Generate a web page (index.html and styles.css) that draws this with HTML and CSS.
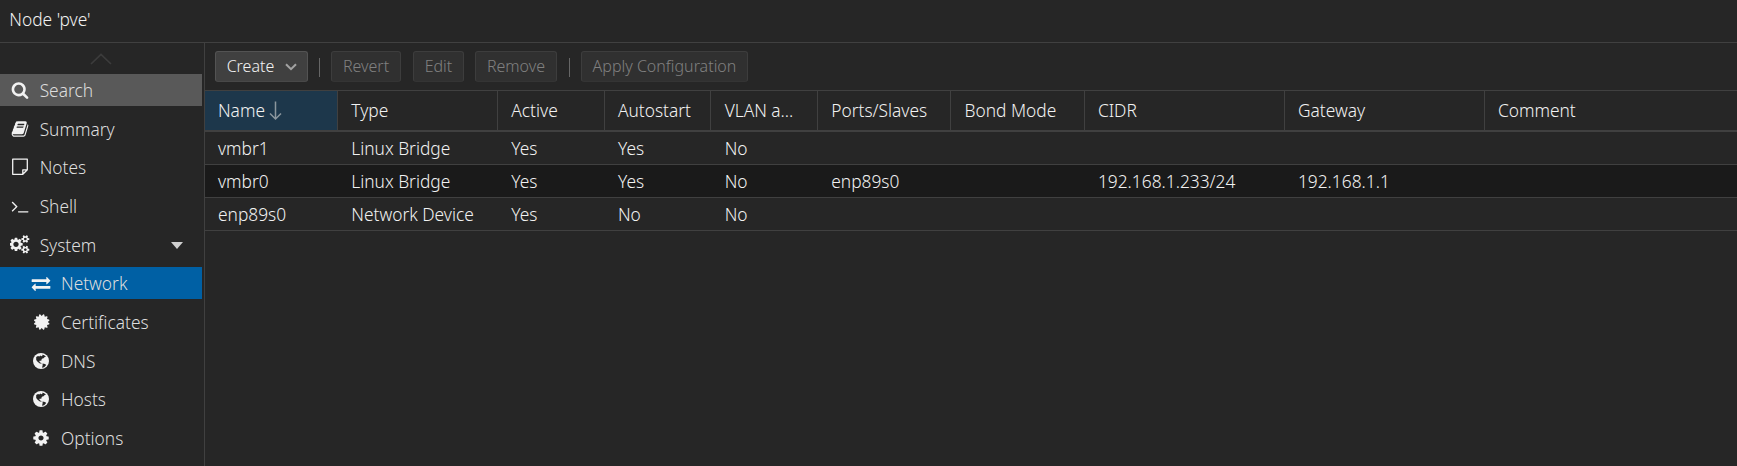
FILE: index.html
```html
<!DOCTYPE html>
<html lang="en">
<head>
<meta charset="utf-8">
<title>Node 'pve'</title>
<link rel="stylesheet" href="styles.css">
</head>
<body>
<svg class="defs" width="0" height="0">
  <symbol id="globe" viewBox="0 0 16 16">
    <circle cx="8" cy="8" r="8" fill="#f2f2f2"/>
    <path class="land" d="M3.200 3.900L5 2.900L6.300 3.400L7.400 2.400L8.300 3.200L9.600 2.700L9 1.700L10.800 1.900L13 3.600L11.400 4.300L10.600 5.200L9.400 5.600L8.400 6.800L8.200 8L6.900 7.600L6.300 8.400L7.100 9.400L8.400 10L8.400 10.800L6.400 10.300L4.400 8.600L3.200 7Z M9.600 10.400L12 11L13.200 12.100L11.200 14.300L9 14.700L9.600 12.600Z"/>
  </symbol>
</svg>
<header class="title">Node 'pve'</header>
<div class="body">
  <nav class="side">
    <div class="scroller"><svg width="22" height="12" viewBox="0 0 22 12"><path d="M1 11L11 1.500L21 11" fill="none" stroke="#3c3c3c" stroke-width="1.700"/></svg></div>
    <a class="item hover"><svg class="ico" viewBox="0 0 1792 1792"><path d="M1216 832q0-185-131.500-316.500t-316.500-131.500-316.500 131.500-131.500 316.500 131.500 316.500 316.500 131.500 316.500-131.500 131.500-316.500zm512 832q0 52-38 90t-90 38q-54 0-90-38l-343-342q-179 124-399 124-143 0-273.500-55.500t-225-150-150-225-55.500-273.500 55.500-273.500 150-225 225-150 273.500-55.500 273.500 55.500 225 150 150 225 55.500 273.500q0 220-124 399l343 343q37 37 37 90z"/></svg>Search</a>
    <a class="item"><svg class="ico" viewBox="0 0 1792 1792"><path d="M1703 478q40 57 18 129l-275 906q-19 64-76.500 107.500t-122.500 43.500h-923q-77 0-148.500-53.500t-99.500-131.500q-24-67-2-127 0-4 3-27t4-37q1-8-3-21.500t-3-19.500q2-11 8-21t16.500-23.500 16.500-23.500q23-38 45-91.500t30-91.500q3-10 .5-30t-.5-28q3-11 17-28t17-23q21-36 42-92t25-90q1-9-2.500-32t.5-28q4-13 22-30.500t22-22.500q19-26 42.500-84.500t27.500-96.500q1-8-3-25.500t-2-26.500q2-8 9-18t18-23 17-21q8-12 16.500-30.500t15-35 16-36 19.500-32 26.500-23.500 36-11.500 47.500 5.500l-1 3q38-9 51-9h761q74 0 114 56t18 130l-274 906q-36 119-71.500 153.500t-128.500 34.500h-869q-27 0-38 15-11 16-1 43 24 70 144 70h923q29 0 56-15.500t35-41.500l300-987q7-22 5-57 38 15 59 43zm-1064 2q-4 13 2 22.500t20 9.500h608q13 0 25.500-9.500t16.500-22.500l21-64q4-13-2-22.500t-20-9.500h-608q-13 0-25.500 9.500t-16.500 22.500zm-83 256q-4 13 2 22.500t20 9.500h608q13 0 25.500-9.500t16.500-22.500l21-64q4-13-2-22.500t-20-9.500h-608q-13 0-25.500 9.500t-16.500 22.500z"/></svg>Summary</a>
    <a class="item"><svg class="ico" viewBox="0 0 18 18"><path d="M1.700 1.200H16.300V11.800L11.800 16.300H1.700ZM16.300 11.800H11.800V16.300" fill="none" stroke="#f2f2f2" stroke-width="1.300" stroke-linejoin="round"/></svg>Notes</a>
    <a class="item"><svg class="ico" viewBox="0 0 1792 1792"><path d="M649 983l-466 466q-10 10-23 10t-23-10l-50-50q-10-10-10-23t10-23l393-393-393-393q-10-10-10-23t10-23l50-50q10-10 23-10t23 10l466 466q10 10 10 23t-10 23zm1079 457v64q0 14-9 23t-23 9h-960q-14 0-23-9t-9-23v-64q0-14 9-23t23-9h960q14 0 23 9t9 23z"/></svg>Shell</a>
    <a class="item"><svg class="ico wide" viewBox="0 0 1920 1792"><path d="M832 896q0-106-75-181t-181-75-181 75-75 181 75 181 181 75 181-75 75-181zm768 512q0-52-38-90t-90-38-90 38-38 90q0 53 37.500 90.500t90.500 37.500 90.500-37.500 37.500-90.500zm0-1024q0-52-38-90t-90-38-90 38-38 90q0 53 37.500 90.500t90.500 37.500 90.500-37.500 37.500-90.500zm-384 421v185q0 10-7 19.500t-16 10.500l-155 24q-11 35-32 76 34 48 90 115 7 11 7 20 0 12-7 19-23 30-82.500 89.500t-78.500 59.500q-11 0-21-7l-115-90q-37 19-77 31-11 108-23 155-7 24-30 24h-186q-11 0-20-7.500t-10-17.500l-23-153q-34-10-75-31l-118 89q-7 7-20 7-11 0-21-8-144-133-144-160 0-9 7-19 10-14 41-53t47-61q-23-44-35-82l-152-24q-10-1-17-9.500t-7-19.500v-185q0-10 7-19.500t16-10.500l155-24q11-35 32-76-34-48-90-115-7-11-7-20 0-12 7-20 22-30 82-89t79-59q11 0 21 7l115 90q34-18 77-32 11-108 23-154 7-24 30-24h186q11 0 20 7.500t10 17.500l23 153q34 10 75 31l118-89q8-7 20-7 11 0 21 8 144 133 144 160 0 8-7 19-12 16-42 54t-45 60q23 48 34 82l152 23q10 2 17 10.500t7 19.500zm640 533v140q0 16-149 31-12 27-30 52 51 113 51 138 0 4-4 7-122 71-124 71-8 0-46-47t-52-68q-20 2-30 2t-30-2q-14 21-52 68t-46 47q-2 0-124-71-4-3-4-7 0-25 51-138-18-25-30-52-149-15-149-31v-140q0-16 149-31 13-29 30-52-51-113-51-138 0-4 4-7 4-2 35-20t59-34 30-16q8 0 46 46.500t52 67.500q20-2 30-2t30 2q51-71 92-112l6-2q4 0 124 70 4 3 4 7 0 25-51 138 17 23 30 52 149 15 149 31zm0-1024v140q0 16-149 31-12 27-30 52 51 113 51 138 0 4-4 7-122 71-124 71-8 0-46-47t-52-68q-20 2-30 2t-30-2q-14 21-52 68t-46 47q-2 0-124-71-4-3-4-7 0-25 51-138-18-25-30-52-149-15-149-31v-140q0-16 149-31 13-29 30-52-51-113-51-138 0-4 4-7 4-2 35-20t59-34 30-16q8 0 46 46.500t52 67.500q20-2 30-2t30 2q51-71 92-112l6-2q4 0 124 70 4 3 4 7 0 25-51 138 17 23 30 52 149 15 149 31z"/></svg>System<svg class="expander" viewBox="0 0 12 7"><path d="M0 0H12L6 7Z"/></svg></a>
    <a class="item sub selected"><svg class="ico wide" viewBox="0 0 1792 1792"><path d="M1792 1184v192q0 13-9.500 22.500t-22.500 9.500h-1376v192q0 13-9.500 22.500t-22.500 9.500q-12 0-24-10l-319-320q-9-9-9-22 0-14 9-23l320-320q9-9 23-9 13 0 22.500 9.500t9.500 22.500v192h1376q13 0 22.500 9.500t9.500 22.500zm0-544q0 14-9 23l-320 320q-9 9-23 9-13 0-22.500-9.500t-9.500-22.500v-192h-1376q-13 0-22.500-9.500t-9.500-22.500v-192q0-13 9.500-22.500t22.500-9.500h1376v-192q0-14 9-23t23-9q12 0 24 10l319 319q9 9 9 23z"/></svg>Network</a>
    <a class="item sub"><svg class="ico" viewBox="0 0 1792 1792"><path d="M1575 896l138 135q30 28 20 70-12 41-52 51l-188 48 53 186q12 41-19 70-29 31-70 19l-186-53-48 188q-10 40-51 52-12 2-19 2-31 0-51-22l-135-138-135 138q-28 30-70 20-41-11-51-52l-48-188-186 53q-41 12-70-19-31-29-19-70l53-186-188-48q-40-10-52-51-10-42 20-70l138-135-138-135q-30-28-20-70 12-41 52-51l188-48-53-186q-12-41 19-70 29-31 70-19l186 53 48-188q10-41 51-51 41-12 70 19l135 139 135-139q29-30 70-19 41 10 51 51l48 188 186-53q41-12 70 19 31 29 19 70l-53 186 188 48q40 10 52 51 10 42-20 70z"/></svg>Certificates</a>
    <a class="item sub"><svg class="ico globe"><use href="#globe"/></svg>DNS</a>
    <a class="item sub"><svg class="ico globe"><use href="#globe"/></svg>Hosts</a>
    <a class="item sub"><svg class="ico" viewBox="0 0 1792 1792"><path d="M1152 896q0-106-75-181t-181-75-181 75-75 181 75 181 181 75 181-75 75-181zm512-109v222q0 12-8 23t-20 13l-185 28q-19 54-39 91 35 50 107 138 10 12 10 25t-9 23q-27 37-99 108t-94 71q-12 0-26-9l-138-108q-44 23-91 38-16 136-29 186-7 28-36 28h-222q-14 0-24.500-8.500t-11.500-21.500l-28-184q-49-16-90-37l-141 107q-10 9-25 9-14 0-25-11-126-114-165-168-7-10-7-23 0-12 8-23 15-21 51-66.500t54-70.500q-27-50-41-99l-183-27q-13-2-21-12.500t-8-23.500v-222q0-12 8-23t19-13l186-28q14-46 39-92-40-57-107-138-10-12-10-24 0-10 9-23 26-36 98.500-107.500t94.500-71.500q13 0 26 10l138 107q44-23 91-38 16-136 29-186 7-28 36-28h222q14 0 24.500 8.500t11.500 21.500l28 184q49 16 90 37l142-107q9-9 24-9 13 0 25 10 129 119 165 170 7 8 7 22 0 12-8 23-15 21-51 66.500t-54 70.500q26 50 41 98l183 28q13 2 21 12.500t8 23.500z"/></svg>Options</a>
  </nav>
  <main class="main">
    <div class="toolbar">
      <button class="btn create">Create<svg width="12" height="8" viewBox="0 0 12 8"><path d="M1 1.200L6 6.200L11 1.200" fill="none" stroke="#a3a3a3" stroke-width="2"/></svg></button>
      <span class="sep"></span>
      <button class="btn off revert">Revert</button>
      <button class="btn off edit">Edit</button>
      <button class="btn off remove">Remove</button>
      <span class="sep second"></span>
      <button class="btn off apply">Apply Configuration</button>
    </div>
    <div class="row head">
      <div class="sorted">Name<svg width="14" height="20" viewBox="0 0 14 20"><path d="M6.500 0.500V18M1 12.500L6.500 18L12 12.500" fill="none" stroke="#8b969d" stroke-width="1.500"/></svg></div>
      <div>Type</div><div>Active</div><div>Autostart</div><div>VLAN a...</div><div>Ports/Slaves</div><div>Bond Mode</div><div>CIDR</div><div>Gateway</div><div>Comment</div>
    </div>
    <div class="row"><div>vmbr1</div><div>Linux Bridge</div><div>Yes</div><div>Yes</div><div>No</div><div></div><div></div><div></div><div></div><div></div></div>
    <div class="row alt"><div>vmbr0</div><div>Linux Bridge</div><div>Yes</div><div>Yes</div><div>No</div><div>enp89s0</div><div></div><div>192.168.1.233/24</div><div>192.168.1.1</div><div></div></div>
    <div class="row"><div>enp89s0</div><div>Network Device</div><div>Yes</div><div>No</div><div>No</div><div></div><div></div><div></div><div></div><div></div></div>
  </main>
</div>
</body>
</html>
```
FILE: styles.css
```css
* { box-sizing: border-box; }
body {
  margin: 0;
  height: 466px;
  overflow: hidden;
  display: flex;
  flex-direction: column;
  background: #262626;
  color: #f2f2f2;
  font-family: "Noto Sans", sans-serif;
  font-weight: 300;
  font-size: 17.333px;
}
.defs { position: absolute; }
.title {
  height: 43px;
  padding-left: 9.333px;
  line-height: 39px;
  border-bottom: 1px solid #404040;
}
.body { flex: 1; display: flex; min-height: 0; }
.side {
  width: 204.667px;
  padding-right: 2px;
  border-right: 1px solid #404040;
  display: flex;
  flex-direction: column;
  gap: 6.667px;
}
.scroller {
  flex: none;
  height: 24.333px;
  padding-top: 10px;
  display: flex;
  justify-content: center;
}
.item {
  flex: none;
  display: flex;
  align-items: center;
  height: 32px;
  padding-left: 10.667px;
  line-height: 32px;
  color: #dedede;
}
.sub { padding-left: 32px; }
.ico { flex: none; width: 18px; height: 18px; margin-right: 11px; fill: #f2f2f2; }
.ico.wide { width: 20px; height: 18.667px; margin: 0 10px 0 -1px; }
.ico.globe { width: 16px; height: 16px; margin: 0 12px 0 1px; }
.land { fill: #262626; }
.expander { width: 12px; height: 7px; margin: 2px 19px 0 auto; fill: #cfcfcf; }
.hover { background: #595959; }
.selected { background: #0060a4; }
.main { flex: 1; min-width: 0; }
.toolbar {
  height: 48px;
  padding: 8px 0 0 10.333px;
  display: flex;
  border-bottom: 1px solid #404040;
}
.btn {
  height: 31px;
  padding: 0;
  display: flex;
  align-items: center;
  justify-content: center;
  border: 1px solid #535353;
  border-bottom-color: #484848;
  border-radius: 3px;
  background: #404040;
  color: #f2f2f2;
  font: inherit;
  font-size: 16px;
  line-height: 29px;
}
.btn.off { background: #303030; border-color: #3d3d3d #3d3d3d #343434; color: #808080; }
.create { width: 93px; padding-left: 1px; gap: 11px; }
.revert { width: 70px; }
.edit { width: 51px; margin-left: 12px; }
.remove { width: 82px; margin-left: 11px; }
.apply { width: 167px; }
.sep { width: 1px; height: 19px; margin: 7px 11px 0; background: #666; }
.second { margin-left: 12px; }
.row {
  display: grid;
  grid-template-columns: 133.333px 160px 106.667px 106.667px 106.667px 133.333px 133.333px 200px 200px 1fr;
  height: 33px;
  line-height: 32px;
  border-bottom: 1px solid #404040;
}
.row > div { padding-left: 13.333px; white-space: nowrap; }
.head { height: 41px; line-height: 39px; border-bottom-width: 2px; }
.head > div { border-right: 1px solid #404040; }
.head > div:last-child { border-right: 0; }
.row > .sorted { background: #1d374b; display: flex; align-items: center; gap: 4px; }
.alt { background: #1a1a1a; }
```
